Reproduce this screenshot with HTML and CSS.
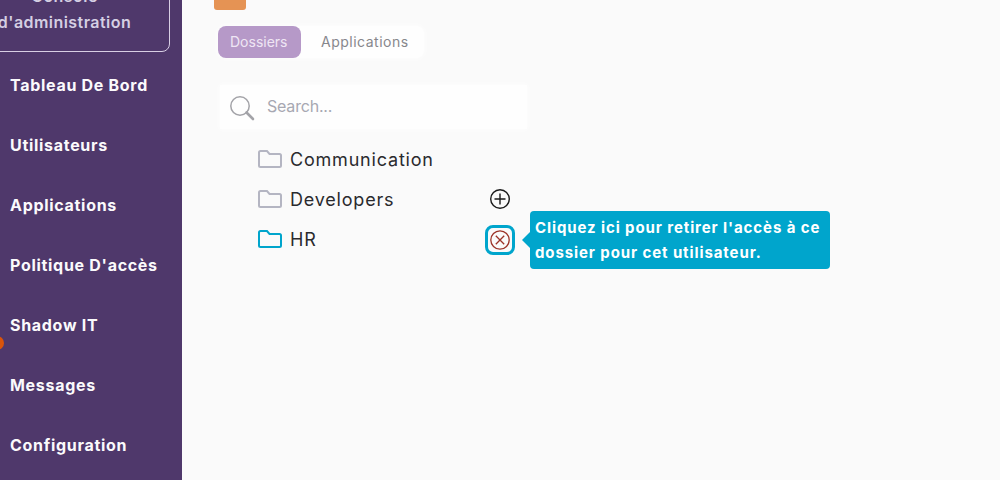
FILE: index.html
```html
<!DOCTYPE html>
<html>

<head>
    <meta charset="UTF-8" name="viewport" content="width=device-width, initial-scale=1.0">
    <title>Console d'administration</title>
    <link rel="stylesheet" href="styles.css">
</head>

<body>
    <div class="sidebar">
        <div class="consoleBox">Console<br>d'administration</div>
        <div class="menu">
            <div class="menuItem">Tableau De Bord</div>
            <div class="menuItem">Utilisateurs</div>
            <div class="menuItem">Applications</div>
            <div class="menuItem">Politique D'accès</div>
            <div class="menuItem">Shadow IT<span class="dot"></span></div>
            <div class="menuItem">Messages</div>
            <div class="menuItem">Configuration</div>
        </div>
    </div>

    <div class="main">
        <div class="orangeBtn"></div>

        <div class="tabs">
            <div class="tab tabActive">Dossiers</div>
            <div class="tab">Applications</div>
        </div>

        <div class="search">
            <svg width="26" height="26" viewBox="0 0 26 26" fill="none" stroke="#a3a3a8">
                <circle cx="11" cy="11" r="9.2" stroke-width="1.5" />
                <path d="M17.5 17.5L24 24" stroke-width="2.6" stroke-linecap="round" />
            </svg>
            <span>Search...</span>
        </div>

        <div class="folders">
            <div class="folder">
                <svg class="folderIcon" width="24" height="18" viewBox="0 0 24 18" fill="none" stroke="#b4b5c2" stroke-width="2">
                    <path d="M1 2.5Q1 1 2.5 1H9L11.5 4H21.5Q23 4 23 5.5V15.5Q23 17 21.5 17H2.5Q1 17 1 15.5Z" />
                </svg>
                <span>Communication</span>
            </div>
            <div class="folder">
                <svg class="folderIcon" width="24" height="18" viewBox="0 0 24 18" fill="none" stroke="#b4b5c2" stroke-width="2">
                    <path d="M1 2.5Q1 1 2.5 1H9L11.5 4H21.5Q23 4 23 5.5V15.5Q23 17 21.5 17H2.5Q1 17 1 15.5Z" />
                </svg>
                <span>Developers</span>
                <svg class="action" width="22" height="22" viewBox="0 0 22 22" fill="none" stroke="#1a1a1a" stroke-width="1.4">
                    <circle cx="11" cy="11" r="9.3" />
                    <path d="M11 5.5V16.5M5.5 11H16.5" />
                </svg>
            </div>
            <div class="folder">
                <svg class="folderIcon" width="24" height="18" viewBox="0 0 24 18" fill="none" stroke="#00a5cc" stroke-width="2">
                    <path d="M1 2.5Q1 1 2.5 1H9L11.5 4H21.5Q23 4 23 5.5V15.5Q23 17 21.5 17H2.5Q1 17 1 15.5Z" />
                </svg>
                <span>HR</span>
                <div class="highlight">
                    <svg width="20" height="20" viewBox="0 0 20 20" fill="none" stroke="#9c3328" stroke-width="1.3">
                        <circle cx="10" cy="10" r="9.2" />
                        <path d="M5.8 5.8L14.2 14.2M14.2 5.8L5.8 14.2" />
                    </svg>
                </div>
                <div class="tooltip">Cliquez ici pour retirer l'accès à ce dossier pour cet utilisateur.</div>
            </div>
        </div>
    </div>
</body>

</html>
```

FILE: styles.css
```css
html, body {
    height: 100%;
}

body {
    margin: 0;
    overflow: hidden;
    display: flex;
    font-family: 'Inter', 'Liberation Sans', sans-serif;
    background-color: #fafafa;
}

.sidebar {
    width: 182px;
    height: 100%;
    background-color: #4f386b;
    overflow: hidden;
    flex-shrink: 0;
}

.consoleBox {
    width: 209px;
    height: 68px;
    margin: -30px 0 0 -41px;
    padding-top: 12px;
    border: 1px solid #d8cfe4;
    border-radius: 8px;
    text-align: center;
    font-size: 16px;
    font-weight: 600;
    letter-spacing: 0.45px;
    line-height: 26px;
    color: #d5cfe3;
}

.menu {
    margin-top: 3px;
}

.menuItem {
    position: relative;
    height: 60px;
    padding-left: 10px;
    line-height: 60px;
    font-size: 16px;
    font-weight: 700;
    letter-spacing: 0.7px;
    color: #fbfafc;
}

.dot {
    position: absolute;
    left: -10px;
    top: 41px;
    width: 14px;
    height: 14px;
    border-radius: 50%;
    background-color: #d9540b;
}

.main {
    flex: 1;
    padding-left: 32px;
}

.orangeBtn {
    width: 32px;
    height: 10px;
    background-color: #e59354;
    border-radius: 0 0 3px 3px;
}

.tabs {
    display: flex;
    width: 206px;
    height: 32px;
    margin: 16px 0 0 4px;
    background-color: #fefefe;
    box-shadow: 0 0 6px #fefefe;
    border-radius: 8px;
    font-size: 14px;
    line-height: 32px;
    letter-spacing: 0.5px;
    color: #87878c;
}

.tab {
    padding: 0 12px;
}

.tabActive {
    width: 59px;
    margin-right: 8px;
    background-color: #b699c8;
    border-radius: 8px;
    letter-spacing: 0;
    color: #efe6f4;
}

.search {
    display: flex;
    align-items: center;
    gap: 12px;
    width: 298px;
    height: 44px;
    margin: 27px 0 0 6px;
    padding-left: 9px;
    background-color: #fefefe;
    box-shadow: 0 0 6px #fefefe;
    font-size: 16px;
    letter-spacing: -0.2px;
    color: #a7a8b2;
}

.search svg {
    margin-top: 2px;
}

.search span {
    margin-bottom: 2px;
}

.folders {
    margin: 10px 0 0 44px;
}

.folder {
    position: relative;
    display: flex;
    align-items: center;
    height: 40px;
    font-size: 18px;
    letter-spacing: 0.8px;
    color: #2a2a2e;
}

.folderIcon {
    margin-right: 8px;
}

.action {
    position: absolute;
    left: 231px;
    top: 9px;
}

.highlight {
    position: absolute;
    left: 227px;
    top: 6px;
    width: 24px;
    height: 24px;
    border: 3px solid #00a5cc;
    border-radius: 8px;
    display: flex;
    align-items: center;
    justify-content: center;
}

.tooltip {
    position: absolute;
    left: 272px;
    top: -8px;
    width: 300px;
    height: 58px;
    padding: 4px 5px;
    box-sizing: border-box;
    background-color: #00a5cc;
    border-radius: 4px;
    font-size: 15px;
    font-weight: 700;
    letter-spacing: 0.9px;
    line-height: 25px;
    color: #fff;
}

.tooltip::before {
    content: "";
    position: absolute;
    left: -8px;
    top: 21px;
    border-top: 8px solid transparent;
    border-bottom: 8px solid transparent;
    border-right: 8px solid #00a5cc;
}
```
